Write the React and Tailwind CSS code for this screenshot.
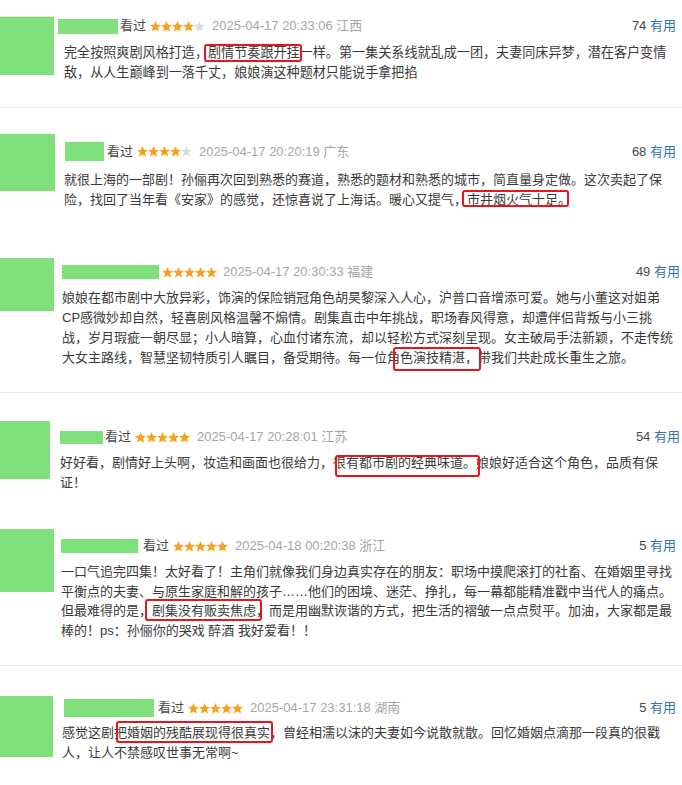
const FONT = { fontFamily: '"Liberation Sans", "Noto Sans CJK SC", sans-serif' };

function Stars({ n }) {
  const pts = '5.5,0 7.1,3.7 11,3.9 8,6.5 9.1,10.6 5.5,8.5 1.9,10.6 3,6.5 0,3.9 3.9,3.7';
  return (
    <svg width="55" height="11" viewBox="0 0 55 11" className="shrink-0">
      {[0, 1, 2, 3, 4].map((i) => (
        <polygon
          key={i}
          points={pts}
          transform={`translate(${i * 11} 0)`}
          fill={i < n ? '#f7a21e' : '#dcdcdc'}
        />
      ))}
    </svg>
  );
}

// 红框标注
function Mark({ text, box }) {
  return (
    <span className="relative inline-block">
      {text}
      <span className={`absolute border-2 border-[#e8141e] rounded-[3px] pointer-events-none ${box}`} />
    </span>
  );
}

function Review({ r }) {
  return (
    <div className={`flex ${r.wrap}`}>
      <div className={`shrink-0 bg-[#7fe07c] ${r.avatar}`} />
      <div className={`flex-1 min-w-0 ${r.col}`}>
        <div className={`flex items-center text-[13px] ${r.row}`}>
          <div className={`shrink-0 bg-[#7fe07c] ${r.name}`} />
          {r.watched && <span className={`text-[#494949] ${r.watchedGap}`}>看过</span>}
          <span className={r.starGap}>
            <Stars n={r.stars} />
          </span>
          <span className={`text-[#a6a6a6] ${r.dateGap}`}>
            {r.date} {r.loc}
          </span>
          <span className="ml-auto text-[#494949]">
            {r.votes} <span className="text-[#3377aa]">有用</span>
          </span>
        </div>
        <div className={`text-[#3a3a3a] whitespace-nowrap ${r.text}`}>
          {r.lines.map((line, i) => (
            <div key={i}>
              {line.map((seg, j) =>
                typeof seg === 'string' ? <span key={j}>{seg}</span> : <Mark key={j} text={seg.t} box={seg.box} />
              )}
            </div>
          ))}
        </div>
      </div>
    </div>
  );
}

const reviews = [
  {
    section: 'h-[108px] border-b border-[#e6e6e6]',
    wrap: 'pt-[17px]',
    avatar: 'w-[54px] h-[58px]',
    col: 'ml-[4px] pr-[6px]',
    row: 'h-[18px]',
    name: 'w-[60px] h-[15px]',
    watched: true,
    watchedGap: 'ml-[2px]',
    starGap: 'ml-[4px]',
    dateGap: 'ml-[7px]',
    stars: 4,
    date: '2025-04-17 20:33:06',
    loc: '江西',
    votes: 74,
    text: 'mt-[8px] pl-[6px] text-[13.1px] leading-[20px]',
    lines: [
      ['完全按照爽剧风格打造，', { t: '剧情节奏跟开挂', box: 'top-[1px] bottom-[1px] left-[-4px] right-[-2px]' }, '一样。第一集关系线就乱成一团，夫妻同床异梦，潜在客户变情'],
      ['敌，从人生巅峰到一落千丈，娘娘演这种题材只能说手拿把掐'],
    ],
  },
  {
    section: 'h-[147px]',
    wrap: 'pt-[26px]',
    avatar: 'w-[55px] h-[57px]',
    col: 'ml-[10px] pr-[6px]',
    row: 'mt-[8px] h-[19px]',
    name: 'w-[39px] h-[19px]',
    watched: true,
    watchedGap: 'ml-[3px]',
    starGap: 'ml-[4px]',
    dateGap: 'ml-[7px]',
    stars: 4,
    date: '2025-04-17 20:20:19',
    loc: '广东',
    votes: 68,
    text: 'mt-[9px] ml-[-1px] text-[13px] leading-[20px]',
    lines: [
      ['就很上海的一部剧！孙俪再次回到熟悉的赛道，熟悉的题材和熟悉的城市，简直量身定做。这次卖起了保'],
      ['险，找回了当年看《安家》的感觉，还惊喜说了上海话。暖心又提气，', { t: '市井烟火气十足。', box: 'top-[0px] bottom-[3px] left-[-5px] right-[2px]' }],
    ],
  },
  {
    section: 'h-[138px] border-b border-[#e6e6e6]',
    wrap: 'pt-[3px]',
    avatar: 'w-[54px] h-[53px]',
    col: 'ml-[8px] pr-[2px]',
    row: 'mt-[5px] h-[18px]',
    name: 'w-[97px] h-[14px]',
    watched: false,
    starGap: 'ml-[3px]',
    dateGap: 'ml-[6px]',
    stars: 5,
    date: '2025-04-17 20:30:33',
    loc: '福建',
    votes: 49,
    text: 'mt-[7px] text-[13px] leading-[20px]',
    lines: [
      ['娘娘在都市剧中大放异彩，饰演的保险销冠角色胡昊黎深入人心，沪普口音增添可爱。她与小董这对姐弟'],
      ['CP感微妙却自然，轻喜剧风格温馨不煽情。剧集直击中年挑战，职场春风得意，却遭伴侣背叛与小三挑'],
      ['战，岁月瑕疵一朝尽显；小人暗算，心血付诸东流，却以轻松方式深刻呈现。女主破局手法新颖，不走传统'],
      ['大女主路线，智慧坚韧特质引人瞩目，备受期待。每一位', { t: '角色演技精湛，', box: 'top-[-1px] bottom-[-3px] left-[6px] right-[-3px]' }, '带我们共赴成长重生之旅。'],
    ],
  },
  {
    section: 'h-[112px]',
    wrap: 'pt-[28px]',
    avatar: 'w-[50px] h-[58px]',
    col: 'ml-[10px] pr-[2px]',
    row: 'mt-[7px] h-[18px]',
    name: 'w-[43px] h-[13px]',
    watched: true,
    watchedGap: 'ml-[2px]',
    starGap: 'ml-[4px]',
    dateGap: 'ml-[7px]',
    stars: 5,
    date: '2025-04-17 20:28:01',
    loc: '江苏',
    votes: 54,
    text: 'mt-[7px] text-[13px] leading-[20px]',
    lines: [
      ['好好看，剧情好上头啊，妆造和画面也很给力，', { t: '很有都市剧的经典味道。', box: 'top-[2px] bottom-[-4px] left-[2px] right-[-4px]' }, '娘娘好适合这个角色，品质有保'],
      ['证！'],
    ],
  },
  {
    section: 'h-[161px] border-b border-[#e6e6e6]',
    wrap: 'pt-[24px]',
    avatar: 'w-[54px] h-[63px]',
    col: 'ml-[7px] pr-[6px]',
    row: 'mt-[8px] h-[18px]',
    name: 'w-[77px] h-[14px]',
    watched: true,
    watchedGap: 'ml-[5px]',
    starGap: 'ml-[4px]',
    dateGap: 'ml-[7px]',
    stars: 5,
    date: '2025-04-18 00:20:38',
    loc: '浙江',
    votes: 5,
    text: 'mt-[7px] text-[13px] leading-[19.5px]',
    lines: [
      ['一口气追完四集！太好看了！主角们就像我们身边真实存在的朋友：职场中摸爬滚打的社畜、在婚姻里寻找'],
      ['平衡点的夫妻、与原生家庭和解的孩子……他们的困境、迷茫、挣扎，每一幕都能精准戳中当代人的痛点。'],
      ['但最难得的是，', { t: '剧集没有贩卖焦虑', box: 'top-[-2px] bottom-[0px] left-[-7px] right-[-6px]' }, '，而是用幽默诙谐的方式，把生活的褶皱一点点熨平。加油，大家都是最'],
      ['棒的！ps：孙俪你的哭戏 醉酒 我好爱看！！'],
    ],
  },
  {
    section: '',
    wrap: 'pt-[30px]',
    avatar: 'w-[53px] h-[61px]',
    col: 'ml-[11px] pr-[6px]',
    row: 'mt-[3px] h-[18px]',
    name: 'w-[90px] h-[18px]',
    watched: true,
    watchedGap: 'ml-[4px]',
    starGap: 'ml-[4px]',
    dateGap: 'ml-[7px]',
    stars: 5,
    date: '2025-04-17 23:31:18',
    loc: '湖南',
    votes: 5,
    text: 'mt-[6px] ml-[-2px] text-[13px] leading-[20px]',
    lines: [
      ['感觉这剧', { t: '把婚姻的残酷展现得很真实', box: 'top-[-2px] bottom-[0px] left-[2px] right-[-3px]' }, '，曾经相濡以沫的夫妻如今说散就散。回忆婚姻点滴那一段真的很戳'],
      ['人，让人不禁感叹世事无常啊~'],
    ],
  },
];

export default function App() {
  return (
    <div className="relative w-[682px] h-[785px] bg-white overflow-hidden" style={FONT}>
      <div className="absolute left-0 top-[16px] w-[50px] h-px bg-[#e6e6e6]" />
      {reviews.map((r, i) => (
        <div key={i} className={r.section}>
          <Review r={r} />
        </div>
      ))}
    </div>
  );
}
